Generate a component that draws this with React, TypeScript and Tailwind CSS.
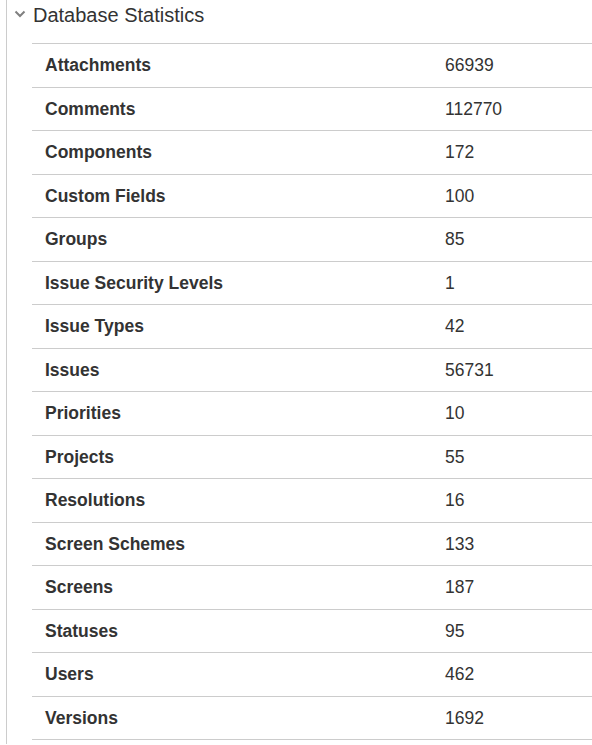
import React from 'react';

const stats: [string, string][] = [
  ['Attachments', '66939'],
  ['Comments', '112770'],
  ['Components', '172'],
  ['Custom Fields', '100'],
  ['Groups', '85'],
  ['Issue Security Levels', '1'],
  ['Issue Types', '42'],
  ['Issues', '56731'],
  ['Priorities', '10'],
  ['Projects', '55'],
  ['Resolutions', '16'],
  ['Screen Schemes', '133'],
  ['Screens', '187'],
  ['Statuses', '95'],
  ['Users', '462'],
  ['Versions', '1692'],
];

const App = () => {
  return (
    <div
      className="w-[592px] h-[745px] overflow-hidden bg-white text-[#333]"
      style={{ fontFamily: '"Liberation Sans", Arial, sans-serif' }}
    >
      <div className="ml-[6px] h-[744px] border-l border-[#ccc]">
        <div className="h-[43px] flex items-start pl-[7px]">
          <svg width="12" height="8" viewBox="0 0 12 8" className="mt-[10px]">
            <path d="M1.5 1.5 L6 6 L10.5 1.5" fill="none" stroke="#808080" strokeWidth="2" />
          </svg>
          <span className="ml-[7px] text-[20px] leading-[30px]">Database Statistics</span>
        </div>
        <div className="ml-[25px] border-t border-[#ccc]">
          {stats.map(([label, value], i) => (
            <div key={i} className="flex items-center h-[43.5px] border-b border-[#ccc] text-[17.5px]">
              <div className="w-[400px] pl-[13px] font-bold">{label}</div>
              <div className="pl-[13px]">{value}</div>
            </div>
          ))}
        </div>
      </div>
    </div>
  );
};

export default App;
